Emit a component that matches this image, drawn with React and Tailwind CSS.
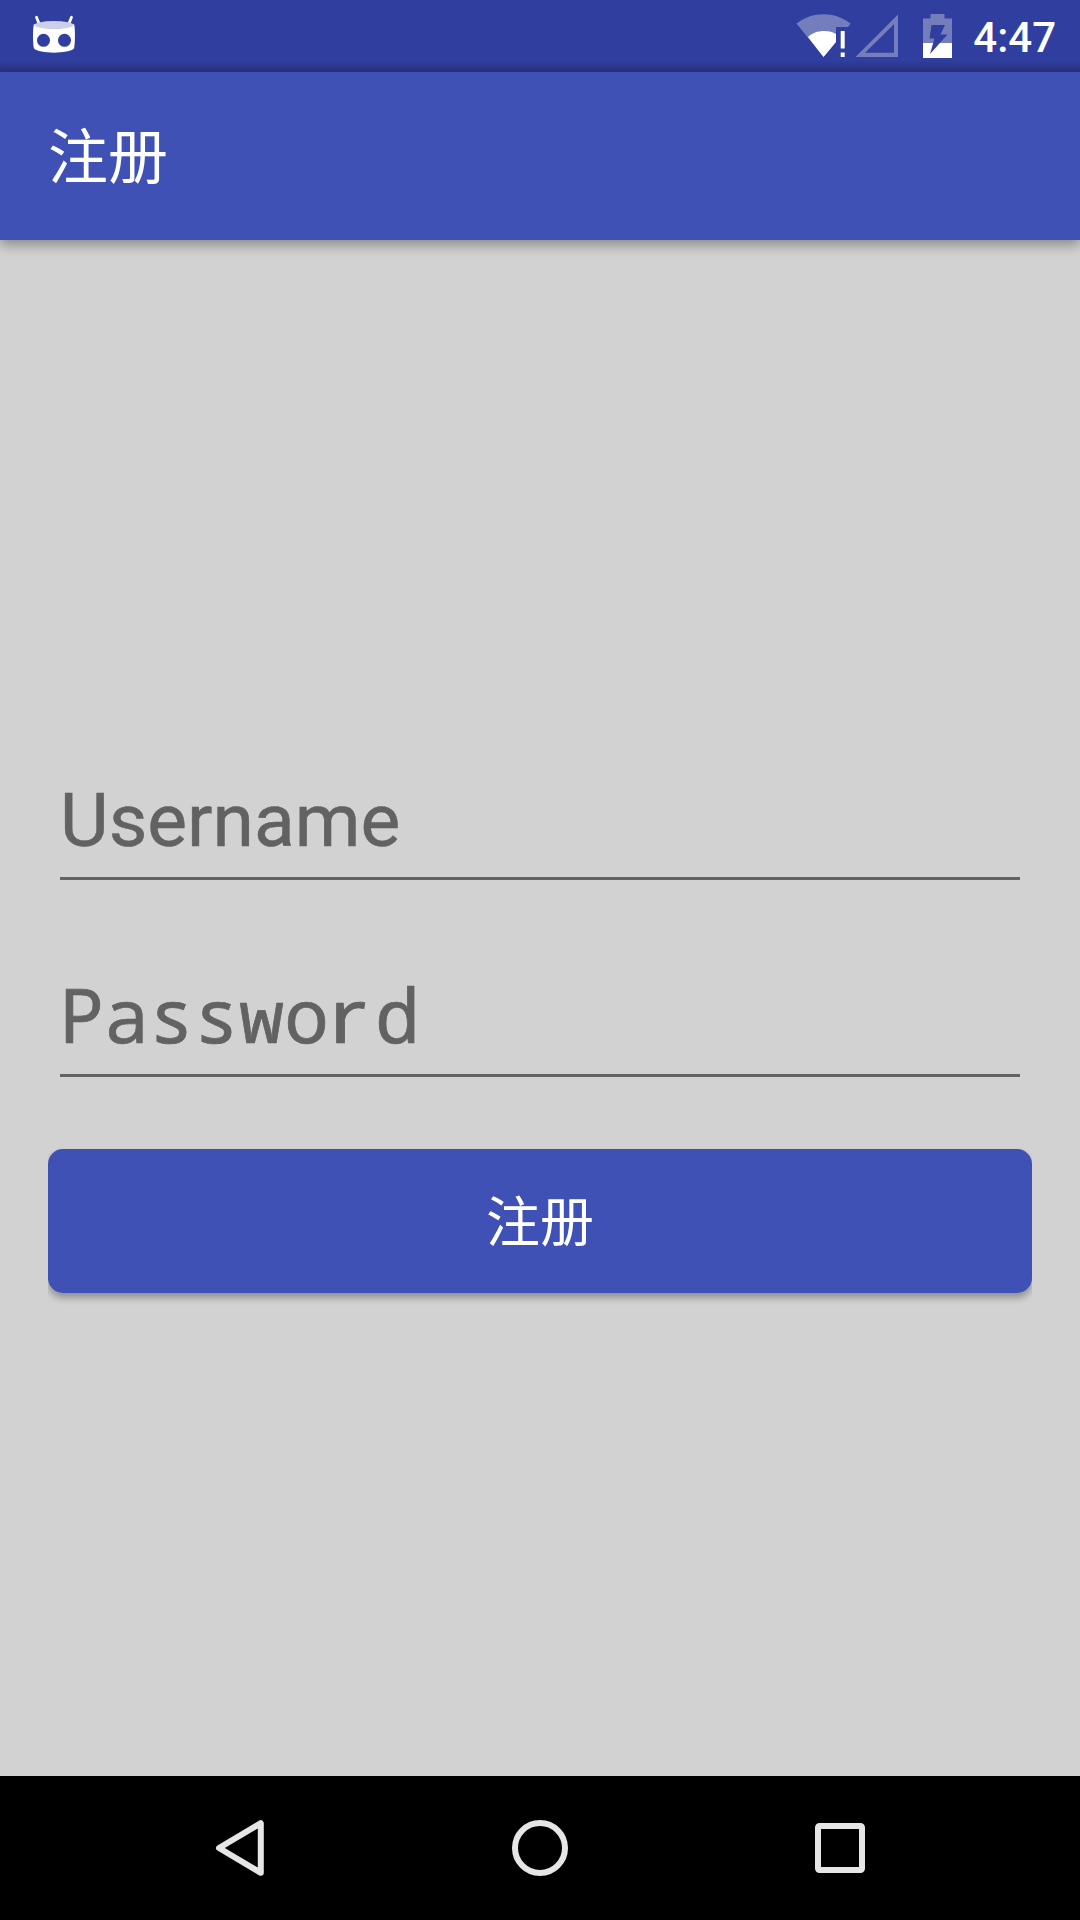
const cjk = "font-['Roboto','Noto_Sans_CJK_SC',sans-serif]";

function StatusBar() {
  return (
    <div className="flex h-[72px] items-start bg-[linear-gradient(to_bottom,#303f9f_0px,#303f9f_60px,#2d3991_66px,#28327e_72px)]">
      <svg className="ml-8 mt-[14px] h-10 w-11" viewBox="0 0 44 40">
        <path d="M4.5 3.2L7 9.5M39.5 3.2L37 9.5" stroke="#fff" strokeWidth="2.8" strokeLinecap="round" />
        <path d="M2 10C10 16 34 16 42 10C43.300 13 43.300 30 42 34.500C37 40 7 40 2 34.500C.7 30 .7 13 2 10Z" fill="#fff" />
        <ellipse cx="22" cy="11" rx="19.500" ry="4" fill="#cbcfe7" />
        <circle cx="11.500" cy="26.300" r="6.500" fill="#303f9f" />
        <circle cx="32.500" cy="26.300" r="6.500" fill="#303f9f" />
      </svg>
      <svg className="ml-auto h-[60px] w-[56px]" viewBox="796 0 56 60">
        <path d="M823.500 57L796.500 23.500C812 11 835 11 850.500 23.500L848 27H836V42Z" fill="#757ebd" />
        <path d="M823.500 57L808 37C814 30 829 29 836 34V42Z" fill="#fff" />
        <path d="M840.700 31H844.700V48.500H840.700ZM840.700 52.500H844.700V57H840.700Z" fill="#fff" />
      </svg>
      <svg className="ml-1 h-[60px] w-[43px]" viewBox="856 0 43 60">
        <path d="M898 14.500V57H855.500ZM894 24.300L865 52.700H894Z" fill="#757ebd" fillRule="evenodd" />
      </svg>
      <svg className="ml-6 h-[60px] w-[30px]" viewBox="923 0 30 60">
        <path d="M923 43V18.500H930.500V14H944.500V18.500H952V43Z" fill="#757ebd" />
        <path d="M923 43H952V58H923Z" fill="#fff" />
        <path d="M931.500 25H945L940.500 34.500H947.500L930 54L934.500 38.500H929.500Z" fill="#303f9f" />
      </svg>
      <span className="ml-5 mr-6 mt-[14px] font-['Roboto',sans-serif] text-[42px] font-medium leading-[48px] text-white">4:47</span>
    </div>
  );
}

function Field({ children, className }) {
  return (
    <div className={`mx-3 h-[98px] whitespace-nowrap border-b-3 border-[#626262] text-[75px] text-[#626262] ${className}`}>
      {children}
    </div>
  );
}

function NavBar() {
  return (
    <nav className="flex h-36 items-center justify-center gap-[236px] bg-black">
      <svg className="h-16 w-16" viewBox="0 0 64 64" fill="none" stroke="#e6e6e6" strokeWidth="6" strokeLinejoin="round">
        <path d="M52.800 7.200V56.800L11 32Z" />
      </svg>
      <svg className="h-16 w-16" viewBox="0 0 64 64" fill="none" stroke="#e6e6e6" strokeWidth="6">
        <circle cx="32" cy="32" r="25" />
      </svg>
      <svg className="h-16 w-16" viewBox="0 0 64 64" fill="none" stroke="#e6e6e6" strokeWidth="6" strokeLinejoin="round">
        <rect x="10" y="10" width="44" height="44" rx="1.500" />
      </svg>
    </nav>
  );
}

export default function App() {
  return (
    <div className={`flex h-[1920px] w-[1080px] flex-col overflow-hidden bg-[#d2d2d2] ${cjk}`}>
      <StatusBar />
      <header className="flex h-[168px] items-center bg-[#3f51b5] px-12 pt-[6px] shadow-[0_5px_12px_rgba(0,0,0,0.35)]">
        <h1 className="text-[60px] font-normal leading-[72px] text-white">注册</h1>
      </header>
      <main className="flex flex-1 flex-col px-12 pt-[542px]">
        <Field className="font-['Roboto',sans-serif] leading-[76px] [-webkit-text-stroke:0.5px_#626262]">Username</Field>
        <Field className="mt-[99px] font-['Noto_Sans_Mono','DejaVu_Sans_Mono',monospace] leading-[70px] [-webkit-text-stroke:0.7px_#626262]">
          <span className="-ml-px">Passwo</span>
          <span className="inline-block w-[46px] origin-left scale-x-120 font-['Noto_Sans',sans-serif]">r</span>
          <span>d</span>
        </Field>
        <div className="mt-[42px] overflow-x-clip pt-[30px]">
          <button className="block h-36 w-full rounded-[15px] bg-[#3f51b5] pt-[5px] text-[54px] leading-[64px] text-white shadow-[0_5px_7px_rgba(0,0,0,0.3)]">注册</button>
        </div>
      </main>
      <NavBar />
    </div>
  );
}
